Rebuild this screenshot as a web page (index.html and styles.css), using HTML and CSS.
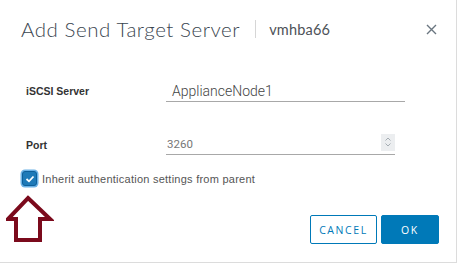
FILE: index.html
```html
<!DOCTYPE html>
<html lang="en">
<head>
  <meta charset="UTF-8" />
  <title>Add Send Target Server</title>
  <link rel="stylesheet" href="styles.css">
</head>
<body>

<div class="dialog">
  <div class="header">
    <h1 class="title">Add Send Target Server</h1>
    <span class="sep"></span>
    <span class="sub">vmhba66</span>
    <svg class="close" width="11" height="11" viewBox="0 0 11 11">
      <path d="M1 1 L10 10 M10 1 L1 10" stroke="#6a7680" stroke-width="1.4" fill="none"/>
    </svg>
  </div>

  <div class="form">
    <label class="field-label" for="server">iSCSI Server</label>
    <div class="input server-input">ApplianceNode1</div>

    <label class="field-label port-label" for="port">Port</label>
    <div class="input port-input">
      <span>3260</span>
      <span class="spinner">
        <svg width="8" height="12" viewBox="0 0 8 12">
          <path d="M1.5 4.5 L4 2 L6.5 4.5 M1.5 7.5 L4 10 L6.5 7.5" stroke="#a5adb3" stroke-width="1" fill="none"/>
        </svg>
      </span>
    </div>
  </div>

  <div class="checkbox-row">
    <span class="checkbox">
      <svg width="10" height="8" viewBox="0 0 10 8">
        <path d="M1.5 4 L4 6.3 L8.5 1.5" stroke="#fff" stroke-width="1.8" fill="none"/>
      </svg>
    </span>
    <span class="check-text">Inherit authentication settings from parent</span>
  </div>

  <div class="footer">
    <button class="btn btn-outline">CANCEL</button>
    <button class="btn btn-primary">OK</button>
  </div>

  <!-- annotation arrow -->
  <svg class="arrow" width="48" height="50" viewBox="0 0 48 50">
    <path d="M22 3 L44 24 L34 24 L34 45 L10 45 L10 24 L2 24 Z" stroke="#7b0a1c" stroke-width="4" fill="none" stroke-linejoin="miter"/>
  </svg>
</div>

</body>
</html>
```

FILE: styles.css
```css
body {
  margin: 0;
  background: #fff;
  font-family: "Liberation Sans", Arial, sans-serif;
}
.dialog {
  position: relative;
  width: 456px;
  height: 262px;
  border-right: 1px solid #dcdcdc;
  border-bottom: 1px solid #dcdcdc;
}
.header {
  display: flex;
  align-items: center;
  height: 28px;
  padding: 15px 19px 0 21px;
}
.title {
  margin: 0;
  font-family: Lato, sans-serif;
  font-weight: 300;
  font-size: 20.5px;
  letter-spacing: 0.55px;
  color: #3b4650;
}
.sep {
  width: 1px;
  height: 18px;
  background: #d6d6d6;
  margin: 0 13px 0 15px;
}
.sub {
  font-family: Lato, sans-serif;
  font-size: 14.5px;
  letter-spacing: 0.2px;
  color: #4d5258;
}
.close {
  margin-left: auto;
}
.form {
  display: grid;
  grid-template-columns: 140px 239px;
  grid-template-rows: 22px 22px;
  row-gap: 31px;
  align-items: end;
  padding: 37px 0 0 26px;
}
.field-label {
  font-size: 10.5px;
  font-weight: bold;
  color: #333;
  padding-bottom: 5px;
}
.port-label {
  padding-bottom: 4px;
}
.input {
  height: 21px;
  border-bottom: 1px solid #a8a8a8;
  display: flex;
  align-items: center;
  padding-left: 6px;
  box-sizing: content-box;
}
.server-input {
  font-family: Roboto, sans-serif;
  font-weight: 300;
  font-size: 14px;
  color: #444;
}
.port-input {
  width: 228px;
  padding-left: 1px;
  font-family: Roboto, sans-serif;
  font-size: 11.5px;
  color: #777;
  justify-content: space-between;
}
.spinner {
  width: 14px;
  height: 17px;
  background: #eceef0;
  display: flex;
  align-items: center;
  justify-content: center;
  margin-bottom: 3px;
}
.checkbox-row {
  display: flex;
  align-items: center;
  gap: 5px;
  padding: 16px 0 0 22px;
}
.checkbox {
  width: 13px;
  height: 13px;
  border-radius: 3px;
  background: #1e7ab8;
  border: 1px solid #0e5f99;
  box-shadow: 0 0 0 1.5px #6cb2e6;
  display: flex;
  align-items: center;
  justify-content: center;
}
.check-text {
  font-size: 11px;
  color: #555;
  letter-spacing: 0.25px;
}
.footer {
  display: flex;
  justify-content: flex-end;
  gap: 4px;
  padding: 29px 17px 0 0;
}
.btn {
  height: 29px;
  border-radius: 2px;
  font-family: "Open Sans", sans-serif;
  font-size: 10.5px;
  letter-spacing: 1.6px;
  cursor: pointer;
}
.btn-outline {
  width: 67px;
  background: #fff;
  border: 1px solid #0079b8;
  color: #0079b8;
}
.btn-primary {
  width: 58px;
  background: #0079b8;
  border: 1px solid #0079b8;
  color: #fff;
}
.arrow {
  position: absolute;
  left: 6px;
  top: 195px;
}
```
